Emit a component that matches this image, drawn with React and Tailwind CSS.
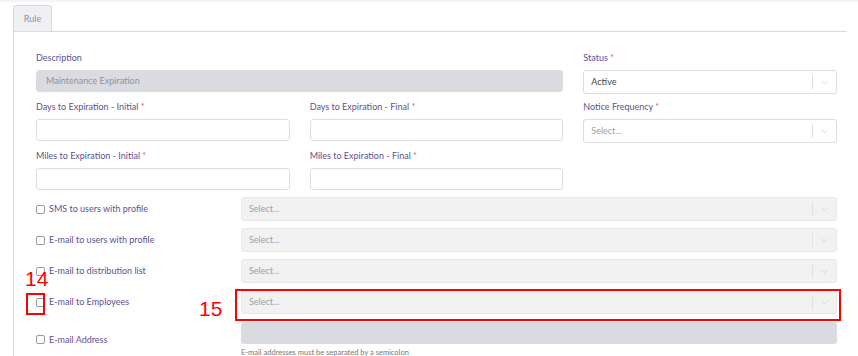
import { ChevronDown } from 'lucide-react'

const labelCls = 'h-[12px] text-[9px] leading-[12px] text-[#5d5193] whitespace-nowrap'

function Label({ text, required }) {
  return (
    <div className={labelCls}>
      {text}
      {required && <span className="text-[#e8566a]"> *</span>}
    </div>
  )
}

function TextInput({ disabled, value }) {
  return (
    <div
      className={`h-[22px] rounded-[3px] border px-[9px] text-[9px] leading-[20px] ${
        disabled ? 'border-[#d9dbe0] bg-[#d9dbe0] text-[#8f939a]' : 'border-[#dedede] bg-white'
      }`}
    >
      {value}
    </div>
  )
}

function Select({ value, disabled }) {
  return (
    <div
      className={`flex h-[24px] items-center rounded-[3px] border ${
        disabled ? 'border-[#e8e8e8] bg-[#f1f1f1]' : 'border-[#dcdcdc] bg-white'
      }`}
    >
      <span className={`flex-1 pl-[7px] text-[9px] ${value ? 'text-[#444]' : 'text-[#a0a0a0]'}`}>
        {value ?? 'Select...'}
      </span>
      <span className="h-[14px] w-px bg-[#e0e0e0]" />
      <span className="flex w-[23px] justify-center text-[#c8c8c8]">
        <ChevronDown size={11} strokeWidth={1.5} />
      </span>
    </div>
  )
}

function Field({ label, required, children }) {
  return (
    <div className="flex flex-col">
      <Label text={label} required={required} />
      <div className="mt-[6px]">{children}</div>
    </div>
  )
}

function CheckRow({ label, children }) {
  return (
    <div className="grid grid-cols-[205px_596px] items-center">
      <div className="flex items-center gap-[4px]">
        <span className="h-[9px] w-[9px] rounded-[2px] border border-[#999] bg-white" />
        <span className="text-[9px] text-[#5d5193]">{label}</span>
      </div>
      {children}
    </div>
  )
}

export default function App() {
  return (
    <div
      className="relative h-[356px] w-[858px] overflow-hidden border-t-2 border-[#f4f5f7] bg-white"
      style={{ fontFamily: 'Lato, "Open Sans", sans-serif' }}
    >
      {/* tab */}
      <div className="pl-[13px] pt-[3px]">
        <div className="flex h-[26px] w-[39px] items-center justify-center rounded-t-[3px] border border-b-0 border-[#d6dbe3] bg-[#eef0f3] text-[9px] text-[#8f949e]">
          Rule
        </div>
      </div>

      {/* panel */}
      <div className="ml-[13px] mr-[11px] border-l border-t border-[#d6dbe3] pl-[22px] pt-[20px]">
        <div className="grid w-[801px] grid-cols-3 items-start gap-x-[20px] gap-y-[7px]">
          <div className="col-span-2">
            <Field label="Description">
              <TextInput disabled value="Maintenance Expiration" />
            </Field>
          </div>
          <Field label="Status" required>
            <Select value="Active" />
          </Field>

          <Field label="Days to Expiration - Initial" required>
            <TextInput />
          </Field>
          <Field label="Days to Expiration - Final" required>
            <TextInput />
          </Field>
          <Field label="Notice Frequency" required>
            <Select />
          </Field>

          <Field label="Miles to Expiration - Initial" required>
            <TextInput />
          </Field>
          <Field label="Miles to Expiration - Final" required>
            <TextInput />
          </Field>
        </div>

        <div className="mt-[7px] flex flex-col gap-[7px]">
          <CheckRow label="SMS to users with profile">
            <Select disabled />
          </CheckRow>
          <CheckRow label="E-mail to users with profile">
            <Select disabled />
          </CheckRow>
          <CheckRow label="E-mail to distribution list">
            <Select disabled />
          </CheckRow>
          <CheckRow label="E-mail to Employees">
            <Select disabled />
          </CheckRow>
          <CheckRow label="E-mail Address">
            <div className="flex flex-col pt-[1px]">
              <div className="h-[22px] rounded-[3px] bg-[#d9dbe0]" />
              <div className="mt-[4px] text-[7.5px] leading-[10px] text-[#777]">
                E-mail addresses must be separated by a semicolon
              </div>
            </div>
          </CheckRow>
        </div>
      </div>

      {/* annotations */}
      <div className="absolute left-[26px] top-[291px] h-[22px] w-[19px] border-2 border-[#ff0000]" />
      <div className="absolute left-[25px] top-[265px] text-[21px] leading-[24px] text-[#ff0000]" style={{ fontFamily: '"Liberation Sans", sans-serif' }}>
        14
      </div>
      <div className="absolute left-[235px] top-[287px] h-[32px] w-[606px] border-2 border-[#ff0000]" />
      <div className="absolute left-[199px] top-[295px] text-[21px] leading-[24px] text-[#ff0000]" style={{ fontFamily: '"Liberation Sans", sans-serif' }}>
        15
      </div>
    </div>
  )
}
